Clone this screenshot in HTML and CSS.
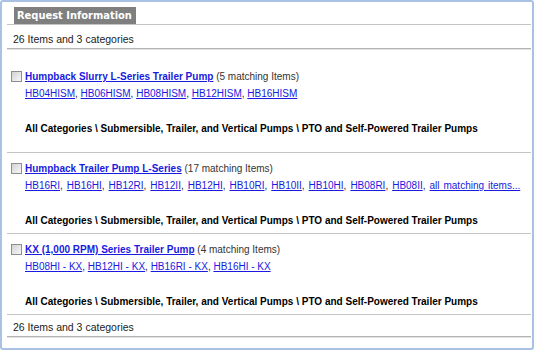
FILE: index.html
```html
<!DOCTYPE html>
<html lang="en">
<head>
  <meta charset="UTF-8" />
  <title>Request Information</title>
  <link rel="stylesheet" href="styles.css">
</head>
<body>
  <div class="frame">
    <div class="heading"><span class="tab">Request Information</span></div>

    <div class="summary">26 Items and 3 categories</div>

    <div class="item first">
      <div class="title">
        <input type="checkbox" class="check" />
        <a href="#" class="name">Humpback Slurry L-Series Trailer Pump</a>
        <span class="count">(5 matching Items)</span>
      </div>
      <div class="codes">
        <a href="#">HB04HISM</a>, <a href="#">HB06HISM</a>, <a href="#">HB08HISM</a>, <a href="#">HB12HISM</a>, <a href="#">HB16HISM</a>
      </div>
      <div class="path">All Categories \ Submersible, Trailer, and Vertical Pumps \ PTO and Self-Powered Trailer Pumps</div>
    </div>

    <div class="item">
      <div class="title">
        <input type="checkbox" class="check" />
        <a href="#" class="name">Humpback Trailer Pump L-Series</a>
        <span class="count">(17 matching Items)</span>
      </div>
      <div class="codes wide">
        <a href="#">HB16RI</a>, <a href="#">HB16HI</a>, <a href="#">HB12RI</a>, <a href="#">HB12II</a>, <a href="#">HB12HI</a>, <a href="#">HB10RI</a>, <a href="#">HB10II</a>, <a href="#">HB10HI</a>, <a href="#">HB08RI</a>, <a href="#">HB08II</a>, <a href="#">all matching items...</a>
      </div>
      <div class="path">All Categories \ Submersible, Trailer, and Vertical Pumps \ PTO and Self-Powered Trailer Pumps</div>
    </div>

    <div class="item">
      <div class="title">
        <input type="checkbox" class="check" />
        <a href="#" class="name">KX (1,000 RPM) Series Trailer Pump</a>
        <span class="count">(4 matching Items)</span>
      </div>
      <div class="codes">
        <a href="#">HB08HI - KX</a>, <a href="#">HB12HI - KX</a>, <a href="#">HB16RI - KX</a>, <a href="#">HB16HI - KX</a>
      </div>
      <div class="path">All Categories \ Submersible, Trailer, and Vertical Pumps \ PTO and Self-Powered Trailer Pumps</div>
    </div>

    <div class="summary bottom">26 Items and 3 categories</div>
  </div>
</body>
</html>
```

FILE: styles.css
```css
body {
  margin: 0;
  font-family: 'Liberation Sans', Arial, sans-serif;
  font-size: 10px;
  color: #222;
  background: #fff;
}

.frame {
  box-sizing: border-box;
  width: 534px;
  height: 350px;
  border: 2px solid #a9c1e2;
  border-radius: 3px;
  padding: 5px 1px 6px 5px;
  background: #fff;
}

.heading {
  border-bottom: 1px solid #c4c4c4;
  padding-left: 7px;
  line-height: 0;
}

.tab {
  display: inline-block;
  background: #7f7f7f;
  color: #fff;
  font-family: 'DejaVu Sans Condensed', 'DejaVu Sans', sans-serif;
  font-weight: bold;
  font-size: 11px;
  line-height: 17px;
  padding: 0 4px 0 3px;
}

.summary {
  padding: 6px 0 1px 6px;
  font-size: 10.5px;
  line-height: 16px;
  color: #222;
  border-bottom: 1px solid #b4b4b4;
  box-shadow: 0 1px 0 #e2e2e2;
}

.summary.bottom {
  border-top: 1px solid #c4c4c4;
  padding-top: 4px;
}

.item {
  padding: 7px 0 4px 18px;
  border-top: 1px solid #c4c4c4;
  line-height: 17px;
}

.item.first {
  border-top: none;
  padding-top: 19px;
  padding-bottom: 15px;
}

.title {
  position: relative;
}

.check {
  appearance: none;
  box-sizing: border-box;
  position: absolute;
  left: -14px;
  top: 3px;
  width: 11px;
  height: 11px;
  margin: 0;
  border: 1px solid #8e8e8e;
  background: linear-gradient(135deg, #d2d2d2, #f8f8f8);
}

a {
  color: #1a1ae0;
  text-decoration: underline;
}

.name {
  font-weight: bold;
}

.count {
  color: #333;
}

.codes.wide {
  word-spacing: 1.2px;
}

.path {
  margin-top: 18px;
  font-weight: bold;
  color: #000;
}
```
